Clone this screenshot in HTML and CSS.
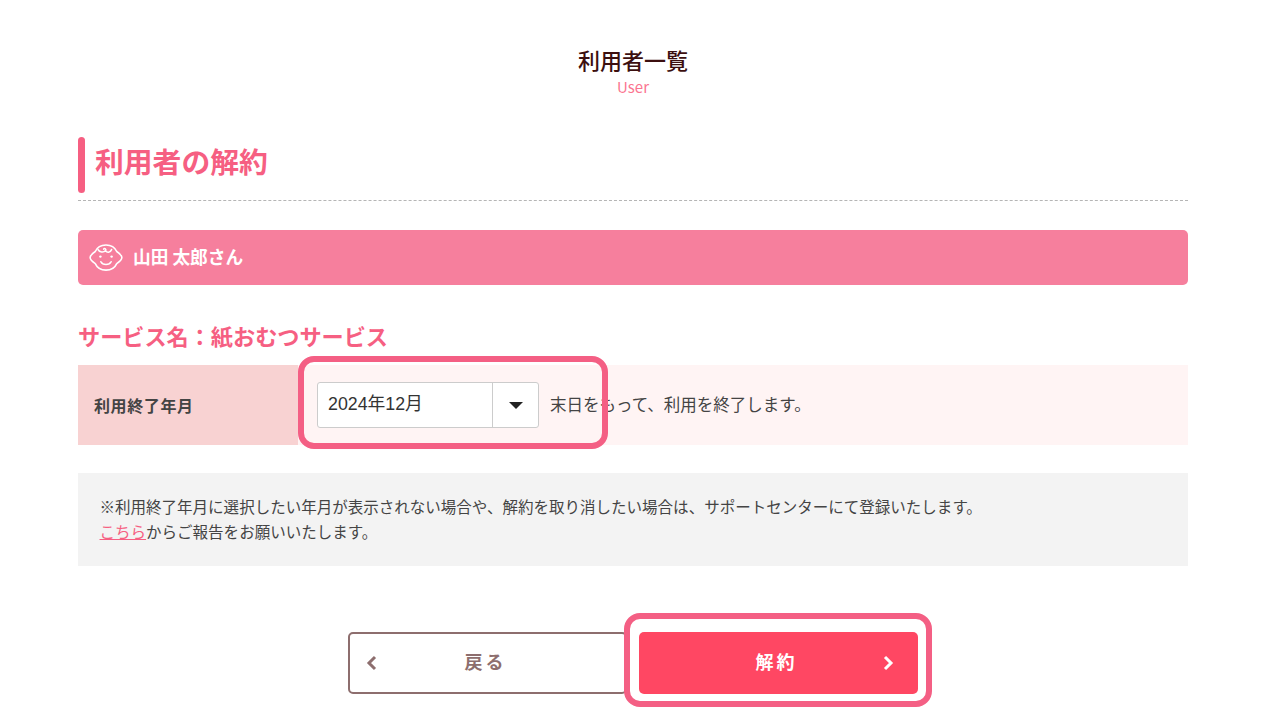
FILE: index.html
```html
<!DOCTYPE html>
<html lang="ja">

<head>
    <meta charset="UTF-8">
    <title>利用者の解約</title>
    <link rel="stylesheet" href="styles.css">
</head>

<body>
    <main class="wrap">
        <header class="page-head">
            <h1>利用者一覧</h1>
            <p class="page-sub">User</p>
        </header>

        <h2 class="title">利用者の解約</h2>

        <div class="user-band">
            <svg class="baby" width="34" height="28" viewBox="0 0 36 30" fill="none" stroke="#fff" stroke-width="1.700" stroke-linecap="round" stroke-linejoin="round">
                <path d="M6.500 8 C3.500 10 1 12.500 1 14.500 C1 16.500 3.500 19 6.500 21 C8.500 25.500 13 28 18 28 C23 28 27.500 25.500 29.500 21 C32.500 19 35 16.500 35 14.500 C35 12.500 32.500 10 29.500 8 C27.500 3.500 23 1 18 1 C13 1 8.500 3.500 6.500 8 Z"/>
                <path d="M9.500 6 C11 9 15.500 9.500 17.500 7 C18.500 5.500 16.500 4 15.500 5.500 M17.500 7 C19 9.500 22.500 9.500 24 6"/>
                <path d="M12.500 19 C14.500 23 21.500 23 23.500 19"/>
                <circle cx="12" cy="13.500" r="1.300" fill="#fff" stroke="none"/>
                <circle cx="24" cy="13.500" r="1.300" fill="#fff" stroke="none"/>
            </svg>
            <span class="user-name">山田 太郎さん</span>
        </div>

        <h3 class="service">サービス名：紙おむつサービス</h3>

        <div class="form-row">
            <div class="form-label">利用終了年月</div>
            <div class="form-body">
                <div class="select">
                    <span class="select-text">2024年12月</span>
                    <span class="select-btn"><i class="caret"></i></span>
                </div>
                <span class="form-text">末日をもって、利用を終了します。</span>
                <div class="mark mark-select"></div>
            </div>
        </div>

        <div class="note">
            ※利用終了年月に選択したい年月が表示されない場合や、解約を取り消したい場合は、サポートセンターにて登録いたします。<br>
            <a href="#">こちら</a>からご報告をお願いいたします。
        </div>

        <div class="buttons">
            <a class="btn btn-back" href="#">
                <svg class="chev chev-left" width="12" height="16" viewBox="0 0 12 16" fill="none" stroke="#8d6e6e" stroke-width="3"><path d="M9 2 L3 8 L9 14"/></svg>
                戻る
            </a>
            <div class="btn-box">
                <a class="btn btn-main" href="#">
                    解約
                    <svg class="chev chev-right" width="12" height="16" viewBox="0 0 12 16" fill="none" stroke="#fff" stroke-width="3"><path d="M3 2 L9 8 L3 14"/></svg>
                </a>
                <div class="mark mark-btn"></div>
            </div>
        </div>
    </main>
</body>

</html>
```

FILE: styles.css
```css
html {
    background: #fff;
}
body {
    margin: 0;
    font-family: "Noto Sans CJK JP", "Noto Sans", sans-serif;
    color: #444;
}
.wrap {
    width: 1110px;
    margin-left: 78px;
    padding-top: 43px;
    padding-bottom: 26px;
}
.page-head {
    text-align: center;
}
h1 {
    margin: 0;
    font-size: 22px;
    line-height: 32px;
    font-weight: 500;
    color: #3c0f0f;
}
.page-sub {
    margin: 2px 0 0;
    font-size: 15px;
    line-height: 20px;
    color: #fb7490;
}
.title {
    position: relative;
    margin: 40px 0 0;
    height: 56px;
    padding-left: 17px;
    padding-bottom: 7px;
    border-bottom: 1px dashed #b5b5b5;
    font-size: 28.800px;
    line-height: 48px;
    font-weight: 700;
    color: #f65f82;
}
.title:before {
    content: '';
    position: absolute;
    left: 0;
    top: 0;
    width: 7px;
    height: 56px;
    border-radius: 4px;
    background: #f65f82;
}
.user-band {
    display: flex;
    align-items: center;
    margin-top: 29px;
    height: 55px;
    padding-left: 11px;
    background: #f67f9d;
    border-radius: 5px;
}
.baby {
    margin-right: 10px;
}
.user-name {
    font-size: 17.700px;
    line-height: 52px;
    height: 55px;
    font-weight: 700;
    color: #fff;
}
.service {
    margin: 34px 0 0;
    font-size: 22.150px;
    line-height: 32px;
    height: 34px;
    font-weight: 700;
    color: #f65f82;
}
.form-row {
    display: flex;
    margin-top: 12px;
    height: 80px;
    background: #fff4f4;
}
.form-label {
    width: 220px;
    padding-left: 16px;
    padding-bottom: 1px;
    box-sizing: border-box;
    display: flex;
    align-items: center;
    background: #f8d2d2;
    font-size: 16px;
    font-weight: 700;
    letter-spacing: .6px;
}
.form-body {
    position: relative;
    display: flex;
    align-items: center;
    padding-left: 19px;
}
.select {
    display: flex;
    width: 222px;
    height: 46px;
    box-sizing: border-box;
    background: #fff;
    border: 1px solid #ccc;
    border-radius: 3px;
}
.select-text {
    flex: 1;
    padding-left: 10px;
    font-family: "Liberation Sans", "Noto Sans CJK JP", sans-serif;
    font-size: 17.800px;
    line-height: 42px;
    color: #333;
}
.select-btn {
    width: 45px;
    border-left: 1px solid #ccc;
    display: flex;
    align-items: center;
    justify-content: center;
}
.caret {
    width: 0;
    height: 0;
    border-left: 7px solid transparent;
    border-right: 7px solid transparent;
    border-top: 7px solid #222;
}
.form-text {
    margin-left: 11px;
    margin-bottom: 2px;
    font-size: 16.500px;
    white-space: nowrap;
}
.mark {
    position: absolute;
    box-sizing: border-box;
    border: 6px solid #f45f84;
    border-radius: 16px;
    pointer-events: none;
}
.mark-select {
    left: 0;
    top: -9px;
    width: 310px;
    height: 93px;
}
.note {
    margin-top: 28px;
    height: 93px;
    box-sizing: border-box;
    padding: 21px 21.500px 0;
    background: #f3f3f3;
    font-size: 15.530px;
    line-height: 25px;
}
.note a {
    color: #f65f82;
}
.buttons {
    display: flex;
    justify-content: center;
    gap: 12px;
    margin-top: 66px;
}
.btn {
    display: flex;
    align-items: center;
    justify-content: center;
    box-sizing: border-box;
    width: 279px;
    height: 62px;
    padding: 0 4px 4px 0;
    border-radius: 5px;
    font-size: 18px;
    font-weight: 700;
    letter-spacing: 3px;
    text-decoration: none;
}
.btn-back {
    position: relative;
    border: 2px solid #8d6e6e;
    color: #8d6e6e;
    background: #fff;
}
.btn-box {
    position: relative;
}
.btn-main {
    position: relative;
    background: #ff4763;
    color: #fff;
}
.chev {
    position: absolute;
    top: 23px;
}
.chev-left {
    left: 16px;
    top: 21px;
}
.chev-right {
    right: 24px;
}
.mark-btn {
    left: -15px;
    top: -19px;
    width: 308px;
    height: 94px;
}
```
